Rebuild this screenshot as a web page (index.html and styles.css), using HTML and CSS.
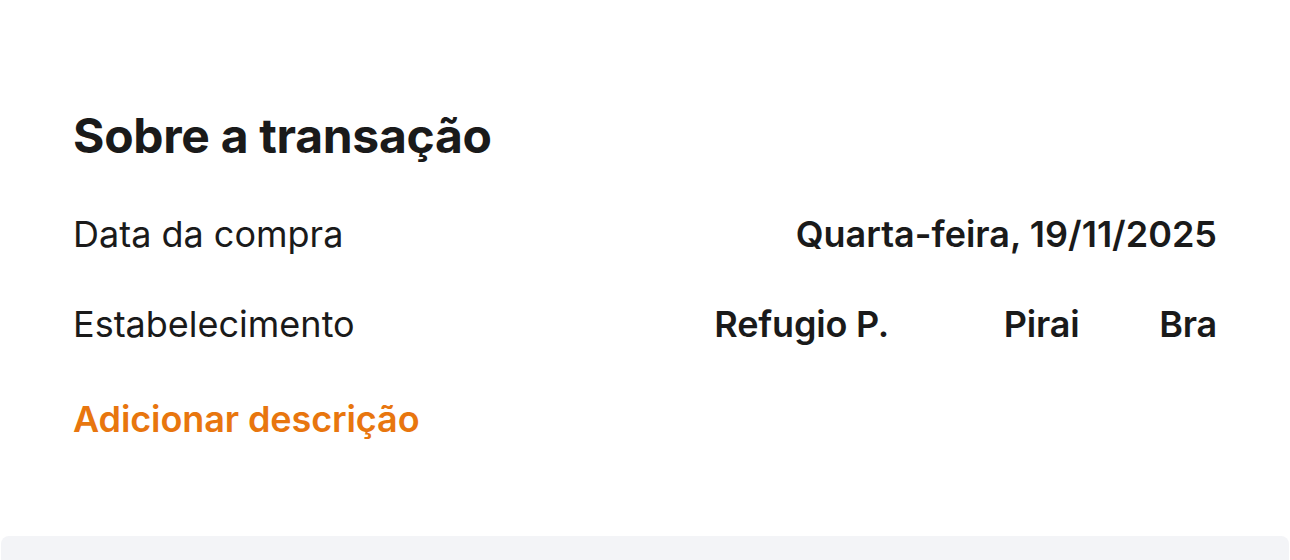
FILE: index.html
```html
<!DOCTYPE html>
<html lang="pt-BR">
<head>
<meta charset="utf-8">
<title>Sobre a transação</title>
<link rel="stylesheet" href="styles.css">
</head>
<body>
<main class="page">
  <section class="card">
    <h2 class="card-title">Sobre a transação</h2>
    <div class="info-list">
      <div class="info-row">
        <span class="info-label">Data da compra</span>
        <span class="info-value">Quarta-feira, 19/11/2025</span>
      </div>
      <div class="info-row">
        <span class="info-label">Estabelecimento</span>
        <span class="info-value merchant">Refugio P.             Pirai         Bra</span>
      </div>
    </div>
    <a class="add-link" href="#">Adicionar descrição</a>
  </section>
  <section class="next-card"></section>
</main>
</body>
</html>
```
FILE: styles.css
```css
html, body {
  margin: 0;
  padding: 0;
  background: #ffffff;
}
body {
  font-family: Inter, "Noto Sans", "Liberation Sans", sans-serif;
  color: #1a1a1a;
}
.page {
  display: flex;
  flex-direction: column;
  min-height: 560px;
}
.card {
  background: #ffffff;
  padding: 107px 73px 95px 73px;
  display: flex;
  flex-direction: column;
  align-items: flex-start;
}
.card-title {
  margin: 0;
  font-size: 48px;
  line-height: 58px;
  font-weight: 700;
  letter-spacing: -0.3px;
  color: #1a1a1a;
}
.info-list {
  align-self: stretch;
  display: flex;
  flex-direction: column;
  gap: 46px;
  margin-top: 47px;
}
.info-row {
  display: flex;
  justify-content: space-between;
  align-items: baseline;
  font-size: 36px;
  line-height: 44px;
}
.info-label {
  font-weight: 400;
}
.info-value {
  font-weight: 600;
}
.merchant {
  white-space: pre;
  letter-spacing: -0.2px;
}
.add-link {
  margin-top: 51px;
  font-size: 36px;
  line-height: 44px;
  font-weight: 600;
  letter-spacing: -0.1px;
  color: #e8760e;
  text-decoration: none;
}
.next-card {
  flex: 1;
  margin: 0 1px;
  background: #f3f4f7;
  border-radius: 8px 8px 0 0;
}
```
